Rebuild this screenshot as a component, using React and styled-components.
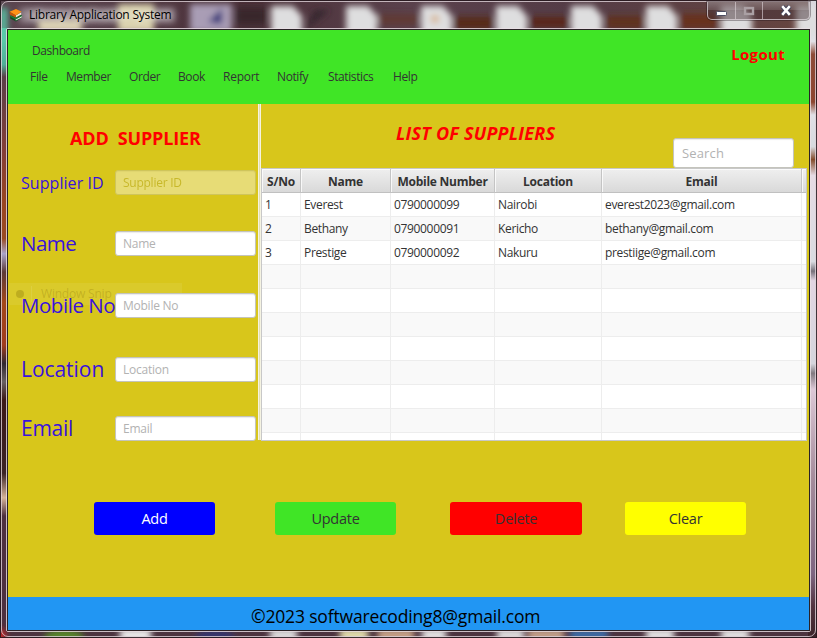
import React from 'react';
import styled, { createGlobalStyle } from 'styled-components';

const GlobalStyle = createGlobalStyle`
  *, *::before, *::after { box-sizing: border-box; }
  body { margin: 0; background: #2a1820; overflow: hidden; }
  input, button { font: inherit; }
`;

const sans = `"Open Sans", "Noto Sans", sans-serif`;

const Desktop = styled.div`
  position: relative;
  width: 817px;
  height: 638px;
  padding: 1px;
  overflow: hidden;
  font-family: ${sans};
  font-size: 12px;
  line-height: 16px;
  color: #333;
`;

const Wallpaper = styled.svg`
  position: absolute;
  inset: 0;
  width: 817px;
  height: 638px;
`;

const Frame = styled.div`
  position: relative;
  width: 815px;
  height: 636px;
  border: 1px solid rgba(222, 210, 216, 0.8);
  border-radius: 7px;
  display: flex;
  flex-direction: column;
`;

const TitleBar = styled.header`
  height: 26px;
  flex: none;
  display: flex;
  align-items: flex-start;
  padding: 0 5px 0 7px;
`;

const AppIcon = styled.svg`
  width: 14px;
  height: 14px;
  margin-top: 6px;
`;

const Title = styled.h1`
  margin: 4px 0 0 6px;
  font-size: 12px;
  font-weight: 400;
  line-height: 18px;
  letter-spacing: -0.23px;
  color: #000;
  flex: 1;
  text-shadow: 0 0 6px rgba(255, 255, 255, 0.75), 0 0 10px rgba(255, 255, 255, 0.5);
`;

const WindowControls = styled.div`
  display: flex;
  height: 18px;
  border: 1px solid rgba(225, 215, 220, 0.75);
  border-top: 0;
  border-radius: 0 0 5px 5px;
  background: rgba(70, 50, 56, 0.5);
  box-shadow: 0 0 0 1px rgba(30, 18, 24, 0.35);
  overflow: hidden;
`;

const WindowButton = styled.button`
  width: ${(p) => p.$width}px;
  padding: 0;
  border: 0;
  border-right: ${(p) => (p.$last ? '0' : '1px solid rgba(225, 215, 220, 0.6)')};
  background: linear-gradient(rgba(255, 255, 255, 0.28), rgba(255, 255, 255, 0.12) 50%, transparent 50%);
  display: flex;
  align-items: center;
  justify-content: center;
`;

const ClientEdge = styled.div`
  margin-left: 4px;
  width: 805px;
  height: 604px;
  border: 1px solid rgba(235, 225, 230, 0.8);
  border-radius: 2px;
`;

const Client = styled.div`
  width: 803px;
  height: 602px;
  border: 1px solid #2a2226;
  background: #d8c61b;
  display: flex;
  flex-direction: column;
`;

const MenuHeader = styled.div`
  height: 74px;
  flex: none;
  background: #40e526;
  display: flex;
  justify-content: space-between;
  padding: 13px 24px 0 24px;
`;

const Brand = styled.div`
  letter-spacing: -0.45px;
`;

const Menu = styled.nav`
  display: flex;
  margin: 10px 0 0 -2px;
`;

const MenuItem = styled.a`
  width: ${(p) => p.$width}px;
  letter-spacing: ${(p) => p.$track || -0.4}px;
`;

const Logout = styled.a`
  font-size: 15px;
  font-weight: 700;
  line-height: 22px;
  letter-spacing: 0.32px;
  color: #f00;
`;

const Workspace = styled.main`
  height: 337px;
  flex: none;
  display: flex;
`;

const FormPane = styled.section`
  position: relative;
  width: 250px;
  padding: 22px 0 0 12px;
`;

const FormTitle = styled.h2`
  margin: 0 0 20px 50px;
  font-size: 18px;
  font-weight: 700;
  line-height: 24px;
  letter-spacing: -0.15px;
  white-space: pre;
  color: #f00;
`;

const Field = styled.label`
  display: flex;
  align-items: center;
  height: 25px;
  margin-bottom: ${(p) => p.$gap}px;
`;

const FieldName = styled.span`
  position: relative;
  width: 95px;
  flex: none;
  padding-left: 1px;
  padding-bottom: ${(p) => p.$lift || 0}px;
  font-size: ${(p) => p.$size}px;
  line-height: 24px;
  letter-spacing: ${(p) => p.$track}px;
  white-space: nowrap;
  color: #3a12dc;
`;

const TextInput = styled.input`
  position: relative;
  width: 141px;
  height: 25px;
  padding: 0 7px;
  border: 1px solid #c4c4bc;
  border-radius: 3px;
  background: #fff;
  box-shadow: inset 0 1px 1px rgba(0, 0, 0, 0.08);
  outline: 0;
  letter-spacing: -0.25px;
  color: #333;
  &::placeholder { color: #b2b2b2; opacity: 1; }
  &:disabled { opacity: 0.4; }
  &:disabled::placeholder { color: #b0a440; }
`;

const SearchInput = styled(TextInput)`
  width: 121px;
  height: 30px;
  padding-left: 8px;
  font-size: 13px;
  letter-spacing: 0.15px;
`;

const SnipGhost = styled.div`
  position: absolute;
  left: 1px;
  top: 179px;
  width: 173px;
  height: 22px;
  display: flex;
  align-items: center;
  background: rgba(255, 255, 255, 0.07);
  color: rgba(120, 90, 0, 0.24);
  letter-spacing: -0.2px;
`;

const GhostDot = styled.span`
  width: 8px;
  height: 8px;
  margin: 0 7px;
  border-radius: 50%;
  background: rgba(120, 100, 0, 0.28);
`;

const GhostLabel = styled.span`
  padding-left: 9px;
  border-left: 1px solid rgba(255, 255, 255, 0.1);
`;

const Divider = styled.div`
  width: 3px;
  height: 336px;
  background: #e5dfae;
  border-left: 1px solid #f5f3e2;
  border-right: 1px solid #f5f3e2;
`;

const ListPane = styled.section`
  width: 546px;
  display: grid;
  grid-template-rows: 34px 30px 273px;
`;

const ListTitle = styled.h2`
  margin: 17px 0 0;
  padding-left: 135px;
  height: 24px;
  font-size: 18px;
  font-style: italic;
  font-weight: 700;
  line-height: 24px;
  letter-spacing: 0.22px;
  color: #f00;
`;

const SearchRow = styled.div`
  display: flex;
  justify-content: flex-end;
  padding-right: 13px;
`;

const Table = styled.div`
  border: 1px solid #c8c8c8;
  background: #fff;
  overflow: hidden;
`;

const columns = '39px 90px 104px 107px 200px 4px';

const HeadRow = styled.div`
  display: grid;
  grid-template: 24px / ${columns};
`;

const HeadCell = styled.div`
  border-right: 1px solid #c4c4c4;
  border-bottom: 1px solid #c0c0c0;
  background: linear-gradient(#efefef, #d9d9d9);
  box-shadow: inset 1px 1px 0 rgba(255, 255, 255, 0.75);
  font-weight: 700;
  line-height: 25px;
  text-align: center;
  letter-spacing: -0.25px;
  &:last-child { border-right: 0; }
`;

const BodyRow = styled.div`
  display: grid;
  grid-template: 24px / ${columns};
  background: ${(p) => (p.$striped ? '#f9f9f9' : '#fff')};
`;

const Cell = styled.div`
  padding-left: 3px;
  border-right: 1px solid #ededed;
  border-bottom: 1px solid #ededed;
  line-height: 23px;
  letter-spacing: -0.34px;
  white-space: nowrap;
  &:last-child { border-right: 0; }
`;

const Actions = styled.div`
  flex: 1;
  display: flex;
  align-items: flex-start;
  padding: 61px 0 0 86px;
`;

const ActionButton = styled.button`
  width: ${(p) => p.$width || 121}px;
  height: 33px;
  margin-right: ${(p) => p.$gap}px;
  padding: 0;
  border: 0;
  border-radius: 3px;
  background: ${(p) => p.$fill};
  color: ${(p) => p.$ink || '#333'};
  font-size: 14.5px;
  letter-spacing: -0.25px;
`;

const Footer = styled.footer`
  height: 33px;
  flex: none;
  background: #2196f3;
  color: #000;
  font-size: 17.5px;
  line-height: 39px;
  letter-spacing: -0.16px;
  padding-left: 243px;
  overflow: hidden;
`;

const menu = [
  ['File', 36, -0.3], ['Member', 63, -0.44], ['Order', 49, -0.4], ['Book', 45, -0.4],
  ['Report', 54, -0.25], ['Notify', 51, -0.4], ['Statistics', 65, -0.4], ['Help', 40, -0.4],
];

const fields = [
  { label: 'Supplier ID', gap: 36, size: 16, track: 0.06, disabled: true },
  { label: 'Name', gap: 37, size: 20.5, track: -0.5, lift: 2 },
  { label: 'Mobile No', gap: 39, size: 20.5, track: -0.45, lift: 2 },
  { label: 'Location', gap: 34, size: 21, track: -0.05, lift: 2 },
  { label: 'Email', gap: 0, size: 21, track: -0.25, lift: 2 },
];

const suppliers = [
  ['1', 'Everest', '0790000099', 'Nairobi', 'everest2023@gmail.com', ''],
  ['2', 'Bethany', '0790000091', 'Kericho', 'bethany@gmail.com', ''],
  ['3', 'Prestige', '0790000092', 'Nakuru', 'prestiige@gmail.com', ''],
];
const emptyRow = ['', '', '', '', '', ''];
const rows = [...suppliers, ...Array(8).fill(emptyRow)];

const blurredFiles = [270, 345, 420, 495, 570, 645, 720, 795];

function DesktopArt() {
  return (
    <Wallpaper viewBox="0 0 817 638">
      <defs>
        <filter id="soft" x="-5%" y="-5%" width="110%" height="110%">
          <feGaussianBlur stdDeviation="3" />
        </filter>
        <linearGradient id="top" x1="0" x2="1" y1="0" y2="0">
          <stop offset="0" stopColor="#5b4650" />
          <stop offset="0.3" stopColor="#4a3038" />
          <stop offset="0.5" stopColor="#5a414c" />
          <stop offset="0.7" stopColor="#543c46" />
          <stop offset="1" stopColor="#67453f" />
        </linearGradient>
        <linearGradient id="left" x1="0" x2="0" y1="0" y2="1">
          <stop offset="0.02" stopColor="#59c9a9" />
          <stop offset="0.06" stopColor="#4fae97" />
          <stop offset="0.08" stopColor="#5a4048" />
          <stop offset="0.2" stopColor="#843d38" />
          <stop offset="0.29" stopColor="#9a4620" />
          <stop offset="0.345" stopColor="#9a4a22" />
          <stop offset="0.37" stopColor="#aaa3c8" />
          <stop offset="0.4" stopColor="#5d3a38" />
          <stop offset="0.45" stopColor="#a34719" />
          <stop offset="0.52" stopColor="#a03c20" />
          <stop offset="0.55" stopColor="#322730" />
          <stop offset="0.58" stopColor="#685f62" />
          <stop offset="0.61" stopColor="#3c1818" />
          <stop offset="0.73" stopColor="#3a2226" />
          <stop offset="0.77" stopColor="#d5b399" />
          <stop offset="0.8" stopColor="#4d3040" />
          <stop offset="1" stopColor="#4d3040" />
        </linearGradient>
        <linearGradient id="right" x1="0" x2="0" y1="0" y2="1">
          <stop offset="0" stopColor="#d8d8de" />
          <stop offset="0.065" stopColor="#e0e0e5" />
          <stop offset="0.085" stopColor="#8d4c38" />
          <stop offset="0.16" stopColor="#8d4630" />
          <stop offset="0.18" stopColor="#e0e0e5" />
          <stop offset="0.23" stopColor="#d8dade" />
          <stop offset="0.25" stopColor="#834b2b" />
          <stop offset="0.275" stopColor="#e6dbe4" />
          <stop offset="0.41" stopColor="#d9dbe0" />
          <stop offset="0.425" stopColor="#77717a" />
          <stop offset="0.44" stopColor="#e2d5e2" />
          <stop offset="0.57" stopColor="#d5d5dc" />
          <stop offset="0.585" stopColor="#827a80" />
          <stop offset="0.61" stopColor="#dcc8d6" />
          <stop offset="0.75" stopColor="#a58c9b" />
          <stop offset="0.9" stopColor="#7d6580" />
          <stop offset="0.95" stopColor="#523440" />
          <stop offset="1" stopColor="#3c2228" />
        </linearGradient>
      </defs>
      <rect width="817" height="638" fill="#4d3440" />
      <rect width="817" height="31" fill="url(#top)" />
      <rect y="28" width="9" height="610" fill="url(#left)" />
      <rect x="808" y="0" width="9" height="638" fill="url(#right)" />
      <g filter="url(#soft)">
        <rect x="0" y="8" width="7" height="32" fill="#59c9a9" />
        <rect x="20" y="8" width="155" height="15" fill="#a79ba3" opacity="0.75" />
        <rect x="38" y="20" width="44" height="12" fill="#ddd3b5" />
        <rect x="118" y="4" width="36" height="28" fill="#dcd4b0" />
        <rect x="190" y="4" width="42" height="28" fill="#a99db5" />
        <path d="M208 22 L222 8 V24 Z" fill="#303078" />
        <rect x="236" y="8" width="30" height="16" fill="#38252c" />
        <path d="M305 30 L330 10 H315 Z" fill="#35262d" />
        <rect x="378" y="14" width="40" height="11" fill="#603a35" />
        <rect x="454" y="17" width="39" height="12" fill="#562917" />
        <rect x="530" y="17" width="39" height="10" fill="#5a2815" />
        <rect x="606" y="16" width="38" height="12" fill="#61301c" />
        <rect x="680" y="14" width="38" height="14" fill="#67331f" />
        {blurredFiles.map((x) => (
          <path key={x} d={`M${x + 1} 6 H${x + 23} L${x + 32} 16 V36 H${x + 1} Z`} fill="#dededf" />
        ))}
        <circle cx="435" cy="19" r="4" fill="#d8b48e" />
        <ellipse cx="64" cy="638" rx="20" ry="9" fill="#56852a" />
        <rect x="120" y="629" width="31" height="12" fill="#eee" />
        <ellipse cx="215" cy="638" rx="20" ry="9" fill="#34346d" />
        <rect x="270" y="629" width="27" height="12" fill="#e0e0e0" />
        <rect x="340" y="629" width="28" height="12" fill="#e4dfae" />
        <rect x="378" y="629" width="36" height="12" fill="#c7a288" />
        <rect x="422" y="629" width="24" height="12" fill="#e6e6e6" />
        <rect x="497" y="629" width="27" height="12" fill="#e0e0e0" />
        <rect x="528" y="629" width="36" height="12" fill="#c5a18a" />
        <rect x="570" y="629" width="38" height="12" fill="#3d6ba4" />
        <rect x="646" y="629" width="28" height="12" fill="#e6e6e6" />
        <rect x="721" y="629" width="28" height="12" fill="#e6e6e6" />
        <circle cx="0" cy="635" r="6" fill="#d02828" />
      </g>
      <path d="M0 0 H817 V1 H0 Z M0 0 H1 V638 H0 Z M0 637 H817 V638 H0 Z M816 0 H817 V638 H816 Z" fill="#24161c" opacity="0.85" />
    </Wallpaper>
  );
}

function BooksIcon() {
  return (
    <AppIcon viewBox="0 0 14 14">
      <path d="M1.2 8 L7 6 L13 7.6 L13 9.8 L7 13.4 L1.2 10.6 Z" fill="#174d28" />
      <path d="M6.6 11 L12.8 8 V9.6 L6.8 12.6 Z" fill="#e9efe2" />
      <path d="M1.4 7.4 L6.8 10 L12.9 7 L12.9 8 L6.8 11.4 L1.4 8.8 Z" fill="#21803c" />
      <path d="M6.6 7.4 L12.2 4.6 V6.6 L6.8 9.4 Z" fill="#f3e9d8" />
      <path d="M0.6 3.8 L7 1 L12.6 3.8 L6.8 7.4 Z" fill="#ff9216" />
      <path d="M0.6 3.8 L6.8 7.2 V9.8 L1 6.8 Z" fill="#c4560c" />
    </AppIcon>
  );
}

export default function App() {
  return (
    <>
      <GlobalStyle />
      <Desktop>
        <DesktopArt />
        <Frame>
          <TitleBar>
            <BooksIcon />
            <Title>Library Application System</Title>
            <WindowControls>
              <WindowButton $width={28} aria-label="Minimize">
                <svg width="13" height="12" viewBox="0 0 13 12">
                  <rect x="1.5" y="6.5" width="10" height="4" rx="1" fill="#fff" stroke="#4c4c60" />
                </svg>
              </WindowButton>
              <WindowButton $width={27} aria-label="Maximize">
                <svg width="12" height="10" viewBox="0 0 12 10">
                  <rect x="2" y="2" width="8" height="6" fill="none" stroke="#aaa0a4" strokeWidth="2.4" />
                </svg>
              </WindowButton>
              <WindowButton $width={46} $last aria-label="Close">
                <svg width="12" height="11" viewBox="0 0 12 11">
                  <path d="M2.2 1.2 L9.8 9.8 M9.8 1.2 L2.2 9.8" stroke="#45455a" strokeWidth="4.4" />
                  <path d="M2.2 1.2 L9.8 9.8 M9.8 1.2 L2.2 9.8" stroke="#fff" strokeWidth="2.5" />
                </svg>
              </WindowButton>
            </WindowControls>
          </TitleBar>
          <ClientEdge>
            <Client>
              <MenuHeader>
                <div>
                  <Brand>Dashboard</Brand>
                  <Menu>
                    {menu.map(([name, width, track]) => (
                      <MenuItem key={name} $width={width} $track={track}>{name}</MenuItem>
                    ))}
                  </Menu>
                </div>
                <Logout>Logout</Logout>
              </MenuHeader>
              <Workspace>
                <FormPane>
                  <SnipGhost>
                    <GhostDot />
                    <GhostLabel>Window Snip</GhostLabel>
                  </SnipGhost>
                  <FormTitle>{'ADD  SUPPLIER'}</FormTitle>
                  {fields.map((f) => (
                    <Field key={f.label} $gap={f.gap}>
                      <FieldName $size={f.size} $track={f.track} $lift={f.lift}>{f.label}</FieldName>
                      <TextInput placeholder={f.label} disabled={f.disabled} />
                    </Field>
                  ))}
                </FormPane>
                <Divider />
                <ListPane>
                  <ListTitle>LIST OF SUPPLIERS</ListTitle>
                  <SearchRow>
                    <SearchInput placeholder="Search" />
                  </SearchRow>
                  <Table>
                    <HeadRow>
                      {['S/No', 'Name', 'Mobile Number', 'Location', 'Email', ''].map((h, i) => (
                        <HeadCell key={i}>{h}</HeadCell>
                      ))}
                    </HeadRow>
                    {rows.map((row, i) => (
                      <BodyRow key={i} $striped={i % 2 === 1}>
                        {row.map((value, j) => (
                          <Cell key={j}>{value}</Cell>
                        ))}
                      </BodyRow>
                    ))}
                  </Table>
                </ListPane>
              </Workspace>
              <Actions>
                <ActionButton $fill="#00f" $ink="#fff" $gap={60}>Add</ActionButton>
                <ActionButton $fill="#40e526" $gap={54}>Update</ActionButton>
                <ActionButton $fill="#f00" $width={132} $gap={43}>Delete</ActionButton>
                <ActionButton $fill="#ff0" $gap={0}>Clear</ActionButton>
              </Actions>
              <Footer>©2023 softwarecoding8@gmail.com</Footer>
            </Client>
          </ClientEdge>
        </Frame>
      </Desktop>
    </>
  );
}
